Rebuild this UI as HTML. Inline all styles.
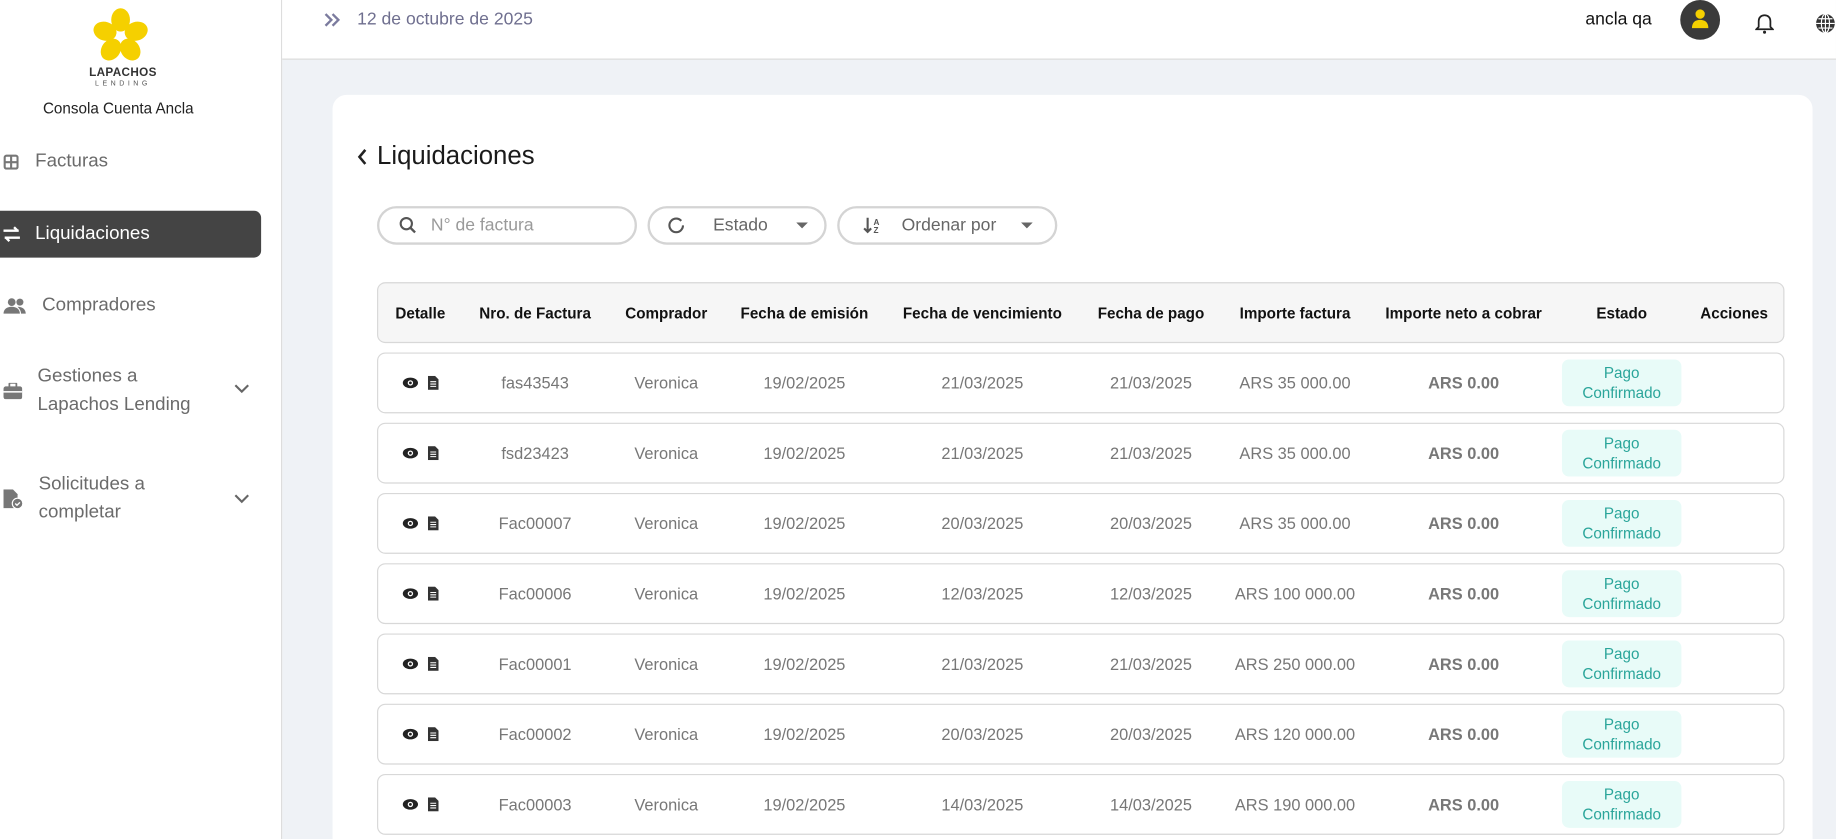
<!DOCTYPE html>
<html><head><meta charset="utf-8"><style>
html,body{margin:0;padding:0;width:1836px;height:839px;overflow:hidden}
body{position:relative;background:#eff2f6}
#clip{position:absolute;left:0;top:0;width:1836px;height:839px;overflow:hidden}
#wrap{position:absolute;left:0;top:0;width:1568px;height:717px;overflow:hidden;transform:scale(1.1709);transform-origin:0 0;font-family:"Liberation Sans",sans-serif;background:#eff2f6}
.abs{position:absolute}
#side{left:0;top:0;width:240px;height:717px;background:#fff;border-right:1px solid #ddd}
#head{left:241px;top:0;right:0;height:50px;background:#fff;border-bottom:1px solid #d9d9d9}
.nav{position:absolute;left:0;color:#6b6b6b;font-size:16px;line-height:24px}
.nav svg{position:absolute}
#card{left:284px;top:81px;width:1264px;height:660px;background:#fff;border-radius:12px}
.pill{position:absolute;top:176px;height:29px;border:2px solid #d4d4d4;border-radius:17px;background:#fff;color:#777;font-size:15px;line-height:29px}
.row{position:absolute;left:322px;width:1200px;height:50px;border:1px solid #d8d8d8;border-radius:7px;background:#fff}
.hdr{background:#f6f6f6;top:241px}
.c{position:absolute;top:0;height:100%;display:flex;align-items:center;justify-content:center;transform:translateX(-50%);white-space:nowrap;font-size:14px;color:#777}
.hdr .c{color:#111;font-weight:bold;font-size:13px}
.b{font-weight:bold}
.badge{background:#e8fbf8;color:#2aa59a;font-size:13px;line-height:17px;text-align:center;width:102px;height:40px;border-radius:6px;display:flex;align-items:center;justify-content:center}
</style></head><body><div id="clip"><div id="wrap">
<div id="side" class="abs">
  <svg class="abs" style="left:78px;top:6px" width="50" height="48" viewBox="0 0 50 48">
    <g fill="#f5d000">
      <ellipse cx="25" cy="11" rx="8" ry="10"/>
      <ellipse cx="25" cy="11" rx="8" ry="10" transform="rotate(72 25 25)"/>
      <ellipse cx="25" cy="11" rx="8" ry="10" transform="rotate(144 25 25)"/>
      <ellipse cx="25" cy="11" rx="8" ry="10" transform="rotate(216 25 25)"/>
      <ellipse cx="25" cy="11" rx="8" ry="10" transform="rotate(288 25 25)"/>
    </g><circle cx="25" cy="25" r="4" fill="#fff"/>
  </svg>
  <div class="abs" style="left:0;width:210px;top:57px;text-align:center;font-size:10px;font-weight:bold;color:#333;letter-spacing:.3px">LAPACHOS</div>
  <div class="abs" style="left:0;width:210px;top:69px;text-align:center;font-size:6px;color:#555;letter-spacing:3px">LENDING</div>
  <div class="abs" style="left:0;width:202px;top:85px;text-align:center;font-size:13px;color:#222">Consola Cuenta Ancla</div>
  <div class="nav" style="top:126px"><svg style="left:3px;top:6px" width="13" height="13" viewBox="0 0 13 13"><rect x="1" y="1" width="11" height="11" rx="1.5" fill="none" stroke="#777" stroke-width="1.8"/><path d="M6.5 1v11M1 6.5h11" stroke="#777" stroke-width="1.8"/></svg><span style="position:absolute;left:30px;white-space:nowrap">Facturas</span></div>
  <div class="abs" style="left:0;top:180px;width:223px;height:40px;background:#444;border-radius:0 6px 6px 0"></div>
  <div class="nav" style="top:188px;color:#fff"><svg style="left:2px;top:5px" width="16" height="14" viewBox="0 0 16 14"><path d="M1 4h13M10 1l3 3M15 10H2M6 13l-3-3" stroke="#fff" stroke-width="2" fill="none"/></svg><span style="position:absolute;left:30px;white-space:nowrap">Liquidaciones</span></div>
  <div class="nav" style="top:249px"><svg style="left:3px;top:5px" width="20" height="14" viewBox="0 0 20 14"><circle cx="7" cy="4" r="3.3" fill="#777"/><circle cx="14" cy="4" r="3" fill="#777"/><path d="M0 14c0-4 3-6 7-6s7 2 7 6zM12 8c4 0 7 2 7 6h-4c0-2-1-4-3-6z" fill="#777"/></svg><span style="position:absolute;left:36px;white-space:nowrap">Compradores</span></div>
  <div class="nav" style="top:310px"><svg style="left:3px;top:17px" width="16" height="14" viewBox="0 0 16 14"><rect x="0" y="3" width="16" height="11" rx="2" fill="#777"/><rect x="5" y="0" width="6" height="4" rx="1" fill="none" stroke="#777" stroke-width="1.5"/><rect x="0" y="7" width="16" height="1.3" fill="#fff"/></svg><span style="position:absolute;left:32px;white-space:nowrap">Gestiones a<br>Lapachos Lending</span><svg style="left:200px;top:18px" width="13" height="8" viewBox="0 0 13 8"><path d="M1 1l5.5 5.5L12 1" stroke="#666" stroke-width="1.8" fill="none"/></svg></div>
  <div class="nav" style="top:402px"><svg style="left:3px;top:16px" width="17" height="17" viewBox="0 0 17 17"><path d="M0 0h8l4 4v12H0z" fill="#777"/><circle cx="12" cy="12" r="4.5" fill="#777" stroke="#fff" stroke-width="1"/><path d="M10 12l1.5 1.5L14 11" stroke="#fff" stroke-width="1.2" fill="none"/></svg><span style="position:absolute;left:33px;white-space:nowrap">Solicitudes a<br>completar</span><svg style="left:200px;top:20px" width="13" height="8" viewBox="0 0 13 8"><path d="M1 1l5.5 5.5L12 1" stroke="#666" stroke-width="1.8" fill="none"/></svg></div>
</div>
<div id="head" class="abs">
  <svg class="abs" style="left:36px;top:11px" width="14" height="12" viewBox="0 0 14 12"><path d="M1 1l5 5-5 5M7 1l5 5-5 5" stroke="#7b7b9e" stroke-width="2" fill="none"/></svg>
  <div class="abs" style="left:64px;top:8px;font-size:15px;color:#6f6f8f">12 de octubre de 2025</div>
  <div class="abs" style="left:1113px;top:8px;font-size:15px;color:#111">ancla qa</div>
  <div class="abs" style="left:1194px;top:0;width:34px;height:34px;border-radius:50%;background:#3a3a3a"></div>
  <svg class="abs" style="left:1203px;top:7px" width="16" height="18" viewBox="0 0 16 18"><circle cx="8" cy="5" r="4" fill="#f5d000"/><path d="M1 17c0-5 3-7 7-7s7 2 7 7z" fill="#f5d000"/></svg>
  <svg class="abs" style="left:1258px;top:11px" width="16" height="18" viewBox="0 0 16 18"><path d="M8 2c-3 0-5 2-5 5v5l-2 2h14l-2-2V7c0-3-2-5-5-5z" fill="none" stroke="#222" stroke-width="1.5"/><circle cx="8" cy="16.5" r="1.3" fill="#222"/></svg>
  <svg class="abs" style="left:1309px;top:11px" width="18" height="18" viewBox="0 0 18 18"><circle cx="9" cy="9" r="8" fill="#333"/><path d="M1 9h16M9 1v16M3 5h12M3 13h12" stroke="#fff" stroke-width="1"/><ellipse cx="9" cy="9" rx="3.5" ry="8" fill="none" stroke="#fff" stroke-width="1"/></svg>
</div>
<div id="card" class="abs"></div>
<svg class="abs" style="left:305px;top:127px" width="9" height="14" viewBox="0 0 9 14"><path d="M7 1L2 7l5 6" stroke="#222" stroke-width="2.2" fill="none"/></svg>
<div class="abs" style="left:322px;top:120px;font-size:22px;color:#1a1a1a">Liquidaciones</div>
<div class="pill" style="left:322px;width:218px"><svg class="abs" style="left:17px;top:7px" width="15" height="15" viewBox="0 0 15 15"><circle cx="6" cy="6" r="4.8" fill="none" stroke="#555" stroke-width="1.8"/><path d="M9.5 9.5l4 4" stroke="#555" stroke-width="2"/></svg><span class="abs" style="left:44px;color:#9a9a9a">N° de factura</span></div>
<div class="pill" style="left:553px;width:149px"><svg class="abs" style="left:15px;top:7px" width="15" height="15" viewBox="0 0 15 15"><circle cx="7.5" cy="7.5" r="5.8" fill="none" stroke="#555" stroke-width="1.8" stroke-dasharray="32 5"/></svg><span class="abs" style="left:54px;color:#666">Estado</span><svg class="abs" style="left:125px;top:12px" width="10" height="6"><path d="M0 0h10L5 5z" fill="#666"/></svg></div>
<div class="pill" style="left:715px;width:184px"><svg class="abs" style="left:20px;top:7px" width="16" height="15" viewBox="0 0 16 15"><path d="M4 1v12M1 10l3 3 3-3" stroke="#555" stroke-width="1.8" fill="none"/><text x="9" y="7" font-size="7" font-family="Liberation Sans" font-weight="bold" fill="#555">A</text><text x="9" y="14" font-size="7" font-family="Liberation Sans" font-weight="bold" fill="#555">Z</text></svg><span class="abs" style="left:53px;color:#666">Ordenar por</span><svg class="abs" style="left:155px;top:12px" width="10" height="6"><path d="M0 0h10L5 5z" fill="#666"/></svg></div>
<div class="row hdr">
<div class="c" style="left:36px">Detalle</div><div class="c" style="left:134px">Nro. de Factura</div><div class="c" style="left:246px">Comprador</div><div class="c" style="left:364px">Fecha de emisión</div><div class="c" style="left:516px">Fecha de vencimiento</div><div class="c" style="left:660px">Fecha de pago</div><div class="c" style="left:783px">Importe factura</div><div class="c" style="left:927px">Importe neto a cobrar</div><div class="c" style="left:1062px">Estado</div><div class="c" style="left:1158px">Acciones</div>
</div>
<div id="rows"></div>
</div></div>
<script>
var d=[["fas43543","21/03/2025","35 000.00"],["fsd23423","21/03/2025","35 000.00"],["Fac00007","20/03/2025","35 000.00"],["Fac00006","12/03/2025","100 000.00"],["Fac00001","21/03/2025","250 000.00"],["Fac00002","20/03/2025","120 000.00"],["Fac00003","14/03/2025","190 000.00"]];
var h="";d.forEach(function(r,i){h+='<div class="row" style="top:'+(301+i*60)+'px">'+
'<div class="c" style="left:36px;gap:8px"><svg width="14" height="10" viewBox="0 0 14 10"><ellipse cx="7" cy="5" rx="6.5" ry="4.5" fill="#222"/><circle cx="7" cy="5" r="2.3" fill="#fff"/><circle cx="7" cy="5" r="1.2" fill="#222"/></svg><svg width="9" height="12" viewBox="0 0 9 12"><path d="M0 0h6l3 3v9H0z" fill="#333"/><path d="M2 5h5M2 7h5M2 9h5" stroke="#fff" stroke-width="0.9"/></svg></div>'+
'<div class="c" style="left:134px">'+r[0]+'</div><div class="c" style="left:246px">Veronica</div><div class="c" style="left:364px">19/02/2025</div><div class="c" style="left:516px">'+r[1]+'</div><div class="c" style="left:660px">'+r[1]+'</div><div class="c" style="left:783px">ARS '+r[2]+'</div><div class="c b" style="left:927px">ARS 0.00</div><div class="c" style="left:1062px"><div class="badge">Pago<br>Confirmado</div></div></div>';});
document.getElementById("rows").innerHTML=h;
</script>
</body></html>
